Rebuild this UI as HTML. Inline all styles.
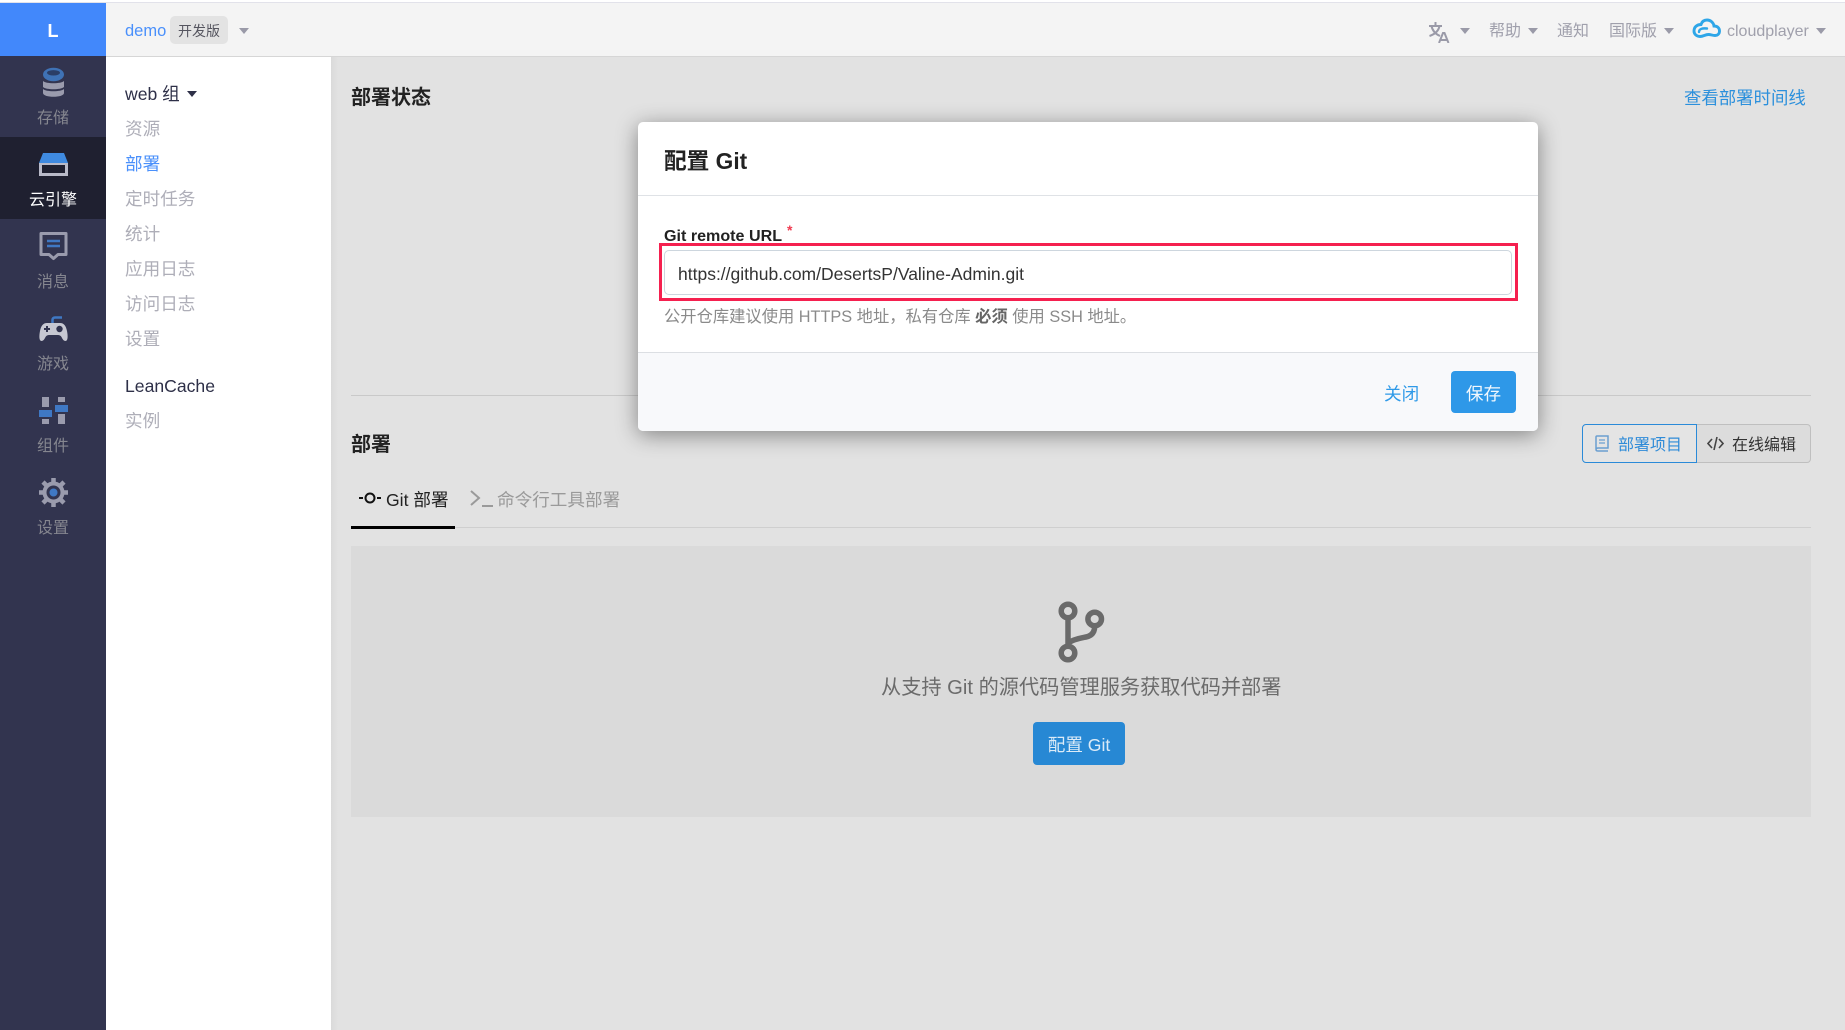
<!DOCTYPE html>
<html lang="zh"><head><meta charset="utf-8"><title>配置 Git</title>
<style>
*{box-sizing:border-box;margin:0;padding:0}
html,body{width:1845px;height:1030px;overflow:hidden;background:#e2e2e2;font-family:"Liberation Sans","Noto Sans CJK SC",sans-serif}
#w{position:absolute;left:0;top:0;width:1845px;height:1030px;filter:blur(.3px)}
.a{position:absolute}
.t{position:absolute;line-height:24px;height:24px;white-space:nowrap}
.c{position:absolute;width:0;height:0;border-left:5.500px solid transparent;border-right:5.500px solid transparent;border-top:6px solid #9a9aa8}
.n{left:0;width:106px;text-align:center;font-size:16px;color:#85868f}
.s{left:125px;font-size:17.600px;color:#aeaeb8}
svg{position:absolute;display:block}
</style></head><body><div id="w">
<div class="a" style="left:0;top:0;width:1845px;height:2px;background:#fff"></div>
<div class="a" style="left:0;top:2px;width:1845px;height:1px;background:#e2e2ea"></div>
<div class="a" style="left:106px;top:3px;width:1739px;height:54px;background:#f4f4f4;border-bottom:1px solid #d6d6d6"></div>
<div class="a" style="left:0;top:3px;width:106px;height:53px;background:#4288fb"></div>
<div class="t" style="left:0;width:106px;top:19px;text-align:center;color:#fff;font-weight:bold;font-size:18px">L</div>
<div class="a" style="left:0;top:56px;width:106px;height:974px;background:#32344f"></div>
<div class="a" style="left:0;top:137px;width:106px;height:82px;background:#1f2030"></div>
<div class="a" style="left:106px;top:57px;width:225px;height:973px;background:#fff"></div>
<div class="a" style="left:331px;top:57px;width:7px;height:973px;background:linear-gradient(90deg,#dadada,#e2e2e2)"></div>

<div class="t" style="left:125px;top:19px;font-size:16.500px;color:#4a90fb">demo</div>
<div class="a" style="left:170px;top:16px;width:58px;height:28px;background:#e3e3e3;border-radius:5px"></div>
<div class="t" style="left:178px;top:19px;font-size:14px;color:#55555f">开发版</div>
<div class="c" style="left:239px;top:28px"></div>

<svg style="left:1427.500px;top:22px" width="22" height="21" viewBox="0 0 22 21" fill="none" stroke="#9a9aa8" stroke-width="2"><path d="M1 4h13M7.500 0v4M3.500 4c1 5 4 8 8.500 10M11.500 4c-1 5-4 8-10 10"/><path d="M11 21l4-10h1.500l4 10M12.500 18h6.500"/></svg>
<div class="c" style="left:1460px;top:28px"></div>
<div class="t" style="left:1489px;top:20px;font-size:16px;color:#a0a0ac">帮助</div>
<div class="c" style="left:1528px;top:28px"></div>
<div class="t" style="left:1557px;top:20px;font-size:16px;color:#a0a0ac">通知</div>
<div class="t" style="left:1609px;top:20px;font-size:16px;color:#a0a0ac">国际版</div>
<div class="c" style="left:1664px;top:28px"></div>
<svg style="left:1692px;top:18px" width="29" height="21" viewBox="0 0 29 21" fill="none" stroke="#2ea6e8" stroke-width="2.900" stroke-linecap="round"><path d="M23 17.500c3 0 4.500-2 4.500-4.500 0-3-2-5-5.500-5-.5-3.500-3.500-6-7-6-3 0-5 1.500-6 4.500C5 6.500 2 9 2 13c0 3 2.500 5.500 6 5.500 3.500 0 5-2 8.500-2 2.500 0 4 1 6.500 1z"/><path d="M7 14c0-3 3-4 8-3.500" stroke-width="2.400"/></svg>
<div class="t" style="left:1727px;top:20px;font-size:16px;color:#a0a0ac">cloudplayer</div>
<div class="c" style="left:1816px;top:28px"></div>

<!-- nav -->
<svg style="left:39px;top:67px" width="29" height="31" viewBox="0 0 29 31"><path d="M4 14c3 3 18 3 21 0v6c-3 3-18 3-21 0zM4 22c3 3 18 3 21 0v4c0 5-21 5-21 0z" fill="#9a9bad"/><ellipse cx="14.500" cy="7.500" rx="10.500" ry="6.800" fill="#3f72b5"/><ellipse cx="14.500" cy="5.800" rx="6.500" ry="2.700" fill="#2b3e66"/></svg>
<div class="t n" style="top:107px">存储</div>
<svg style="left:39px;top:153px" width="29" height="23" viewBox="0 0 29 23"><path d="M4 0h21l4 10H0z" fill="#3f8ae0"/><path d="M0 10h29v13H0z" fill="#b9bac8"/><path d="M3 12h23v8H3z" fill="#1f2030"/></svg>
<div class="t n" style="top:189px;color:#fff">云引擎</div>
<svg style="left:39px;top:232px" width="29" height="29" viewBox="0 0 29 29" fill="none"><path d="M2 1.500h25v21h-8l-4.500 4-4.500-4H2z" stroke="#9a9bad" stroke-width="3" stroke-linejoin="round"/><path d="M8 9h13M8 14h13" stroke="#3f78c4" stroke-width="2.500"/></svg>
<div class="t n" style="top:271px">消息</div>
<svg style="left:39px;top:316px" width="29" height="26" viewBox="0 0 29 26"><path d="M13.500 8V4c0-1.500 1-2.500 2.500-2.500H23" stroke="#3f78c4" stroke-width="2.500" fill="none"/><path d="M8 7h13c4 0 6 3 7 8 1 5 1 10-1.500 10-2 0-3-2-4-4-1-1.500-2-2-3.500-2h-9c-1.500 0-2.500.5-3.500 2-1 2-2 4-4 4C0 25 0 20 1 15c1-5 3-8 7-8z" fill="#c7c8d2"/><path d="M8 10v6M5 13h6" stroke="#32344f" stroke-width="2"/><circle cx="20.500" cy="13" r="3.200" fill="#32344f"/></svg>
<div class="t n" style="top:353px">游戏</div>
<svg style="left:39px;top:396px" width="29" height="28" viewBox="0 0 29 28"><path d="M3 1h7v10H3zM3 23h7v5H3zM19 1h7v5h-7zM19 18h7v10h-7z" fill="#9a9bad"/><path d="M0 14h13v7H0zM16 9h13v7H16z" fill="#3f78c4"/></svg>
<div class="t n" style="top:435px">组件</div>
<svg style="left:39px;top:478px" width="29" height="29" viewBox="0 0 29 29"><circle cx="14.500" cy="14.500" r="9" fill="none" stroke="#9a9bad" stroke-width="4"/><g stroke="#9a9bad" stroke-width="4.500"><path d="M14.500 0v5M14.500 24v5M0 14.500h5M24 14.500h5M4 4l3.500 3.500M21.500 21.500L25 25M25 4l-3.500 3.500M7.500 21.500L4 25"/></g><circle cx="14.500" cy="14.500" r="4" fill="#3f78c4"/></svg>
<div class="t n" style="top:517px">设置</div>

<!-- subnav -->
<div class="t" style="left:125px;top:82px;font-size:17.600px;color:#2e3048">web 组</div>
<div class="c" style="left:187px;top:91px;border-top-color:#2e3048"></div>
<div class="t s" style="top:117px">资源</div>
<div class="t s" style="top:152px;color:#4a90fb">部署</div>
<div class="t s" style="top:187px">定时任务</div>
<div class="t s" style="top:222px">统计</div>
<div class="t s" style="top:257px">应用日志</div>
<div class="t s" style="top:292px">访问日志</div>
<div class="t s" style="top:327px">设置</div>
<div class="t s" style="top:373.500px;color:#2e3048">LeanCache</div>
<div class="t s" style="top:408.500px">实例</div>

<!-- content -->
<div class="t" style="left:351px;top:86px;font-size:20px;font-weight:bold;color:#222">部署状态</div>
<div class="t" style="left:1684px;top:86px;font-size:17.400px;color:#2c90dc">查看部署时间线</div>
<div class="a" style="left:351px;top:395px;width:1460px;height:1px;background:#c9c9c9"></div>
<div class="t" style="left:351px;top:433px;font-size:20px;font-weight:bold;color:#222">部署</div>
<div class="a" style="left:1582px;top:424px;width:115px;height:39px;border:1px solid #2a8ad8;border-radius:4px 0 0 4px;background:#e4e4e4"></div>
<div class="a" style="left:1697px;top:424px;width:114px;height:39px;border:1px solid #bfbfbf;border-left:0;border-radius:0 4px 4px 0;background:#dcdcdc"></div>
<svg style="left:1595px;top:435px" width="14" height="17" viewBox="0 0 14 17" fill="none" stroke="#6b9fd0" stroke-width="1.500"><path d="M1 14V2c0-.6.400-1 1-1h11v12H3c-1.200 0-2 .5-2 1.500S1.800 16 3 16h10"/><path d="M4 5h6M4 8h6" stroke-width="1.200"/></svg>
<div class="t" style="left:1618px;top:433.500px;font-size:16px;color:#2f8bd8">部署项目</div>
<svg style="left:1707px;top:435px" width="17" height="17" viewBox="0 0 17 17" fill="none" stroke="#444" stroke-width="1.600"><path d="M5 4L1 8.500 5 13M12 4l4 4.500-4 4.500M10 2L7 15"/></svg>
<div class="t" style="left:1732px;top:433.500px;font-size:16px;color:#333">在线编辑</div>

<svg style="left:358px;top:491px" width="25" height="14" viewBox="0 0 25 14" fill="none" stroke="#111" stroke-width="2"><circle cx="12" cy="7" r="4.500"/><path d="M1 7h4M19 7h4"/></svg>
<div class="t" style="left:386px;top:488px;font-size:17.600px;color:#222">Git 部署</div>
<div class="a" style="left:455px;top:527px;width:1356px;height:1px;background:#cfcfcf"></div>
<div class="a" style="left:351px;top:526px;width:104px;height:2.500px;background:#000"></div>
<svg style="left:470px;top:490px" width="24" height="18" viewBox="0 0 24 18" fill="none" stroke="#9a9a9a" stroke-width="2"><path d="M1 1l8 7-8 7M12 16h11"/></svg>
<div class="t" style="left:497px;top:488px;font-size:17.600px;color:#9a9a9a">命令行工具部署</div>

<div class="a" style="left:351px;top:546px;width:1460px;height:271px;background:#dadada"></div>
<svg style="left:1056px;top:600px" width="50" height="65" viewBox="0 0 50 65" fill="none" stroke="#6a6a6a" stroke-width="5.500"><circle cx="12" cy="11" r="6.800"/><circle cx="12" cy="53" r="6.800"/><circle cx="38.700" cy="19" r="6.800"/><path d="M12 18v28M12 43c6-4 13-5 18-6 5-1 8.700-4 8.700-11"/></svg>
<div class="t" style="left:881px;top:676px;font-size:20.200px;color:#6b6b6b">从支持 Git 的源代码管理服务获取代码并部署</div>
<div class="a" style="left:1033px;top:722px;width:92px;height:43px;background:#2788d4;border-radius:4px"></div>
<div class="t" style="left:1033px;width:92px;top:733px;text-align:center;font-size:17.600px;color:#dcebf7">配置 Git</div>

<!-- modal -->
<div class="a" style="left:638px;top:122px;width:900px;height:309px;background:#fff;border-radius:5px;box-shadow:0 4px 22px rgba(0,0,0,.42);overflow:hidden">
<div class="a" style="left:0;top:73px;width:900px;height:1px;background:#dfe2e6"></div>
<div class="a" style="left:0;top:230px;width:900px;height:79px;background:#f8f9fb;border-top:1px solid #dcdfe3"></div>
</div>
<div class="t" style="left:664px;top:149px;font-size:22.700px;font-weight:bold;color:#222">配置 Git</div>
<div class="t" style="left:664px;top:224px;font-size:16.100px;font-weight:bold;color:#222">Git remote URL</div>
<div class="t" style="left:787px;top:218px;font-size:14px;font-weight:bold;color:#f03a50">*</div>
<div class="a" style="left:664px;top:250px;width:848px;height:45px;border:1px solid #cdd6de;border-radius:5px;background:#fff"></div>
<div class="t" style="left:678px;top:262px;font-size:17.500px;color:#333">https://github.com/DesertsP/Valine-Admin.git</div>
<div class="a" style="left:658.500px;top:243px;width:859.500px;height:58px;border:3px solid #f5204f"></div>
<div class="t" style="left:664px;top:304.500px;font-size:16.300px;color:#8a8a8a">公开仓库建议使用 HTTPS 地址，私有仓库 <b style="color:#666">必须</b> 使用 SSH 地址。</div>
<div class="t" style="left:1384px;top:381.500px;font-size:17.600px;color:#2f9ae8">关闭</div>
<div class="a" style="left:1451px;top:371px;width:65px;height:42px;background:#2e98e8;border-radius:4px"></div>
<div class="t" style="left:1451px;width:65px;top:381.500px;text-align:center;font-size:17.600px;color:#f2f8fd">保存</div>
</div></body></html>
